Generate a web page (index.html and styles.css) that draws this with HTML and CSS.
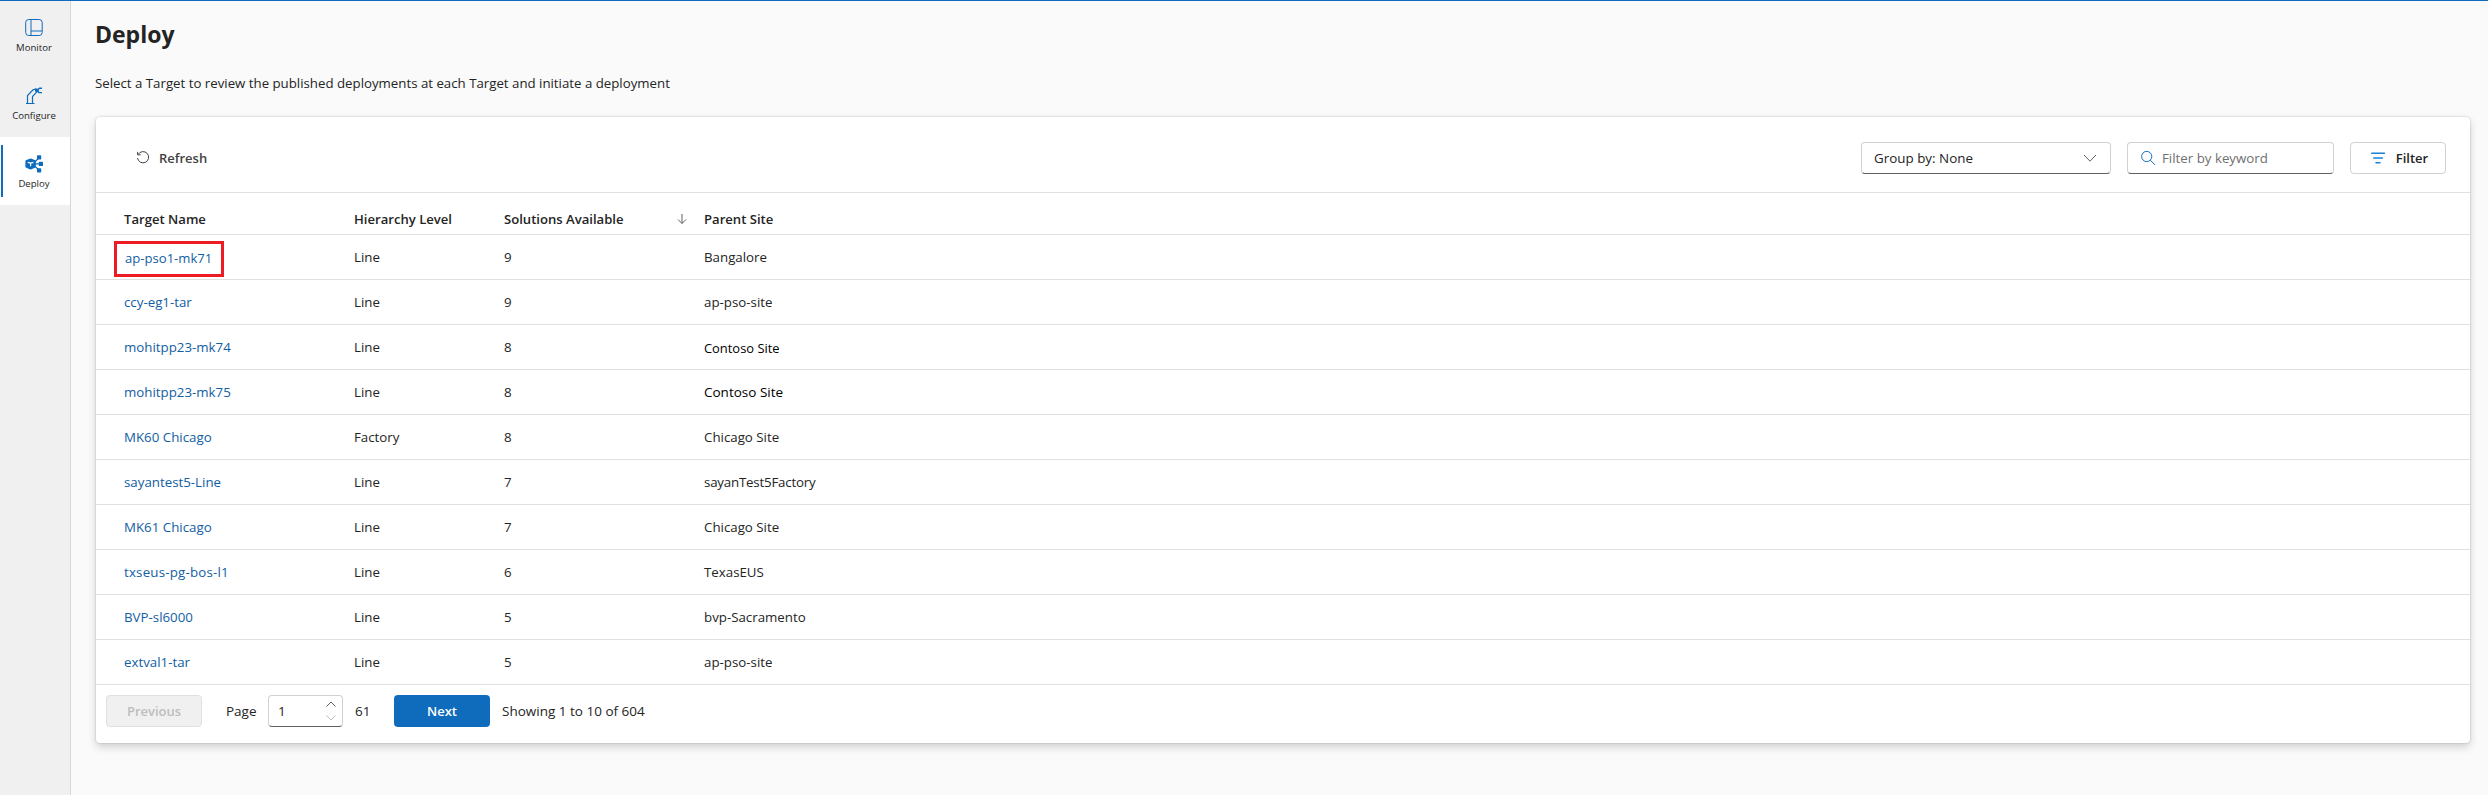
FILE: index.html
```html
<!DOCTYPE html>
<html lang="en">
<head>
<meta charset="utf-8">
<title>Deploy</title>
<link rel="stylesheet" href="styles.css">
</head>
<body>
<div class="app">
  <nav class="sidebar">
    <a class="nav-item">
      <svg class="nav-icon" viewBox="0 0 20 20" fill="none" stroke="#0f6cbd"><rect x="1.7" y="1.5" width="16.5" height="16" rx="3"/><path d="M7 1.5v16M7 13h11"/></svg>
      <span class="nav-label">Monitor</span>
    </a>
    <a class="nav-item">
      <svg class="nav-icon" viewBox="0 0 20 20" fill="none" stroke="#0f6cbd" stroke-width="1.2"><path d="M2 17.5h8.5M3.5 17.5V9.5L9 3.8L12 3M8.5 17.5v-7L12.8 5.8"/><path d="M18 2.3h-2.5L12.8 4.5L15 6.6h3" stroke-width="1.4"/><path d="M11 2.6l2.2-.2 2 1.9-2 2L11 5.4z" fill="#0f6cbd" stroke="none"/></svg>
      <span class="nav-label">Configure</span>
    </a>
    <a class="nav-item active">
      <svg class="nav-icon" viewBox="0 0 20 20" fill="#0f6cbd"><path d="M6.6 5.2L11 7v5.8L6.6 14.8L2.2 12.8V7z" stroke="#0f6cbd" stroke-width="1.6" stroke-linejoin="round"/><path d="M10.5 8l4.5-4M11 9.9h4M10.5 12l4.5 4" stroke="#0f6cbd" stroke-width="1.2"/><rect x="13" y="1.3" width="4.2" height="4.2" rx=".6"/><rect x="14.8" y="7.8" width="4.2" height="4.2" rx=".6"/><rect x="13" y="14.2" width="4.2" height="4.2" rx=".6"/><path d="M3.8 8.3l2.8.8 2.8-.8M6.6 9v3.3" fill="none" stroke="#fff" stroke-width="1.2"/></svg>
      <span class="nav-label">Deploy</span>
    </a>
  </nav>
  <main class="main">
    <h1 class="title">Deploy</h1>
    <p class="subtitle">Select a Target to review the published deployments at each Target and initiate a deployment</p>
    <section class="card">
      <div class="toolbar">
        <button class="refresh">
          <svg width="16" height="16" viewBox="0 0 16 16" fill="none" stroke="#424242"><path d="M3.2 4.4A5.6 5.6 0 1 1 2.5 8M2.6 1.9v2.9h3"/></svg>
          <span>Refresh</span>
        </button>
        <div class="controls">
          <div class="select"><span>Group by: None</span>
            <svg width="20" height="20" viewBox="0 0 20 20" fill="none" stroke="#616161"><path d="M4 7l6 6.2L16 7"/></svg>
          </div>
          <div class="search">
            <svg width="16" height="16" viewBox="0 0 16 16" fill="none" stroke="#0f6cbd"><circle cx="6.7" cy="6.5" r="5.1"/><path d="M10.3 10.2L15 14.9"/></svg>
            <span>Filter by keyword</span>
          </div>
          <button class="filter">
            <svg width="20" height="20" viewBox="0 0 20 20" fill="none" stroke="#1a7fd6" stroke-width="1.6" stroke-linecap="round"><path d="M3.8 5.2h12.6M5.8 10h8.6M8 14.8h4"/></svg>
            <span>Filter</span>
          </button>
        </div>
      </div>
      <div class="grid head">
        <span>Target Name</span><span>Hierarchy Level</span>
        <span class="sorted">Solutions Available<svg width="12" height="12" viewBox="0 0 12 12" fill="none" stroke="#616161"><path d="M6 1v9.5M2 6.5l4 4 4-4"/></svg></span>
        <span>Parent Site</span>
      </div>
      <div class="grid row"><a class="highlight">ap-pso1-mk71</a><span>Line</span><span>9</span><span>Bangalore</span></div>
      <div class="grid row"><a>ccy-eg1-tar</a><span>Line</span><span>9</span><span>ap-pso-site</span></div>
      <div class="grid row"><a>mohitpp23-mk74</a><span>Line</span><span>8</span><span class="contoso first">Contoso Site</span></div>
      <div class="grid row"><a>mohitpp23-mk75</a><span>Line</span><span>8</span><span class="contoso">Contoso Site</span></div>
      <div class="grid row"><a>MK60 Chicago</a><span>Factory</span><span>8</span><span>Chicago Site</span></div>
      <div class="grid row"><a>sayantest5-Line</a><span>Line</span><span>7</span><span class="tight">sayanTest5Factory</span></div>
      <div class="grid row"><a>MK61 Chicago</a><span>Line</span><span>7</span><span>Chicago Site</span></div>
      <div class="grid row"><a class="wide">txseus-pg-bos-l1</a><span>Line</span><span>6</span><span>TexasEUS</span></div>
      <div class="grid row"><a>BVP-sl6000</a><span>Line</span><span>5</span><span>bvp-Sacramento</span></div>
      <div class="grid row"><a>extval1-tar</a><span>Line</span><span>5</span><span>ap-pso-site</span></div>
      <div class="pager">
        <button class="btn previous">Previous</button>
        <span class="page-label">Page</span>
        <div class="spin"><span>1</span>
          <svg width="12" height="28" viewBox="0 0 12 28" fill="none"><path d="M1.5 9.5L6 5l4.5 4.5" stroke="#616161"/><path d="M1.5 18.5L6 23l4.5-4.5" stroke="#bdbdbd"/></svg>
        </div>
        <span class="total">61</span>
        <button class="btn next">Next</button>
        <span class="showing">Showing 1 to 10 of 604</span>
      </div>
    </section>
  </main>
</div>
</body>
</html>
```
FILE: styles.css
```css
* { box-sizing: border-box; }
body { margin: 0; background: #fafafa; color: #242424; font: 13.3px/20px "Open Sans", "Noto Sans", sans-serif; }
button { font: inherit; color: inherit; margin: 0; padding: 0; background: none; border: 0; }
svg { flex: none; }
.app { display: flex; height: 795px; border-top: 1px solid #0f6cbd; overflow: hidden; }
.sidebar { width: 71px; flex: none; background: #f0f0f0; border-right: 1px solid #d6d6d6; }
.nav-item { display: flex; flex-direction: column; align-items: center; height: 68px; padding: 17px 2px 0 0; }
.nav-icon { width: 20px; height: 20px; }
.nav-label { font-size: 9.6px; line-height: 14px; margin-top: 3px; white-space: nowrap; }
.active { background: #fff linear-gradient(#0f6cbd, #0f6cbd) 1px 8px / 2px 52px no-repeat; }
.main { flex: 1; min-width: 0; padding: 17px 18px 0 24px; }
.title { margin: 0; font-size: 23px; line-height: 32px; font-weight: 700; }
.subtitle { margin: 23px 0; padding-bottom: 1px; font-size: 13.25px; line-height: 20px; }
.card { height: 626px; margin-left: 1px; background: #fff; border-radius: 4px; box-shadow: 0 0 2px rgba(0,0,0,.24), 0 4px 8px rgba(0,0,0,.17); }
.toolbar { display: flex; align-items: center; justify-content: space-between; height: 76px; padding: 7px 24px 0 39px; border-bottom: 1px solid #e0e0e0; }
.refresh { display: flex; align-items: center; gap: 8px; font-size: 13px; font-weight: 600; color: #424242; }
.controls { display: flex; gap: 16px; }
.select, .search, .spin { display: flex; align-items: center; height: 32px; border: 1px solid #d1d1d1; border-bottom-color: #616161; border-radius: 4px; background: #fff; }
.select { width: 250px; justify-content: space-between; padding: 0 10px 0 12px; font-size: 13.4px; }
.search { width: 207px; padding-left: 12px; gap: 6px; color: #707070; }
.filter { display: flex; align-items: center; justify-content: center; gap: 8px; width: 96px; height: 32px; border: 1px solid #d1d1d1; border-radius: 4px; font-size: 13px; font-weight: 600; }
.grid { display: grid; grid-template-columns: 230px 150px 200px 1fr; padding-left: 28px; align-items: center; border-bottom: 1px solid #e0e0e0; }
.head { height: 42px; padding-top: 10px; font-size: 13.1px; font-weight: 600; }
.sorted { display: flex; align-items: center; justify-content: space-between; padding-right: 16px; }
.row { height: 45px; }
.row a { color: #115ea3; }
.row .highlight { justify-self: start; width: 110px; height: 36px; margin: 4px 0 0 -10px; border: 3px solid #ed1c24; padding: 4px 0 0 8px; font-size: 13.1px; }
.wide { letter-spacing: .2px; }
.tight { letter-spacing: -.2px; }
.contoso { color: #000; font-size: 13.5px; }
.contoso.first { padding-top: 2px; font-size: 12.9px; }
.pager { display: flex; align-items: center; height: 52px; padding-left: 10px; font-size: 13.5px; }
.btn { width: 96px; height: 32px; border-radius: 4px; font-size: 13px; font-weight: 600; }
.previous { background: #f0f0f0; border: 1px solid #e0e0e0; color: #bdbdbd; }
.next { background: #0f6cbd; color: #fff; }
.page-label { width: 30px; margin: 0 12px 0 24px; white-space: nowrap; }
.spin { width: 75px; justify-content: space-between; padding: 0 5px 0 9px; }
.total { width: 15px; margin: 0 24px 0 12px; }
.showing { margin-left: 12px; }
```
